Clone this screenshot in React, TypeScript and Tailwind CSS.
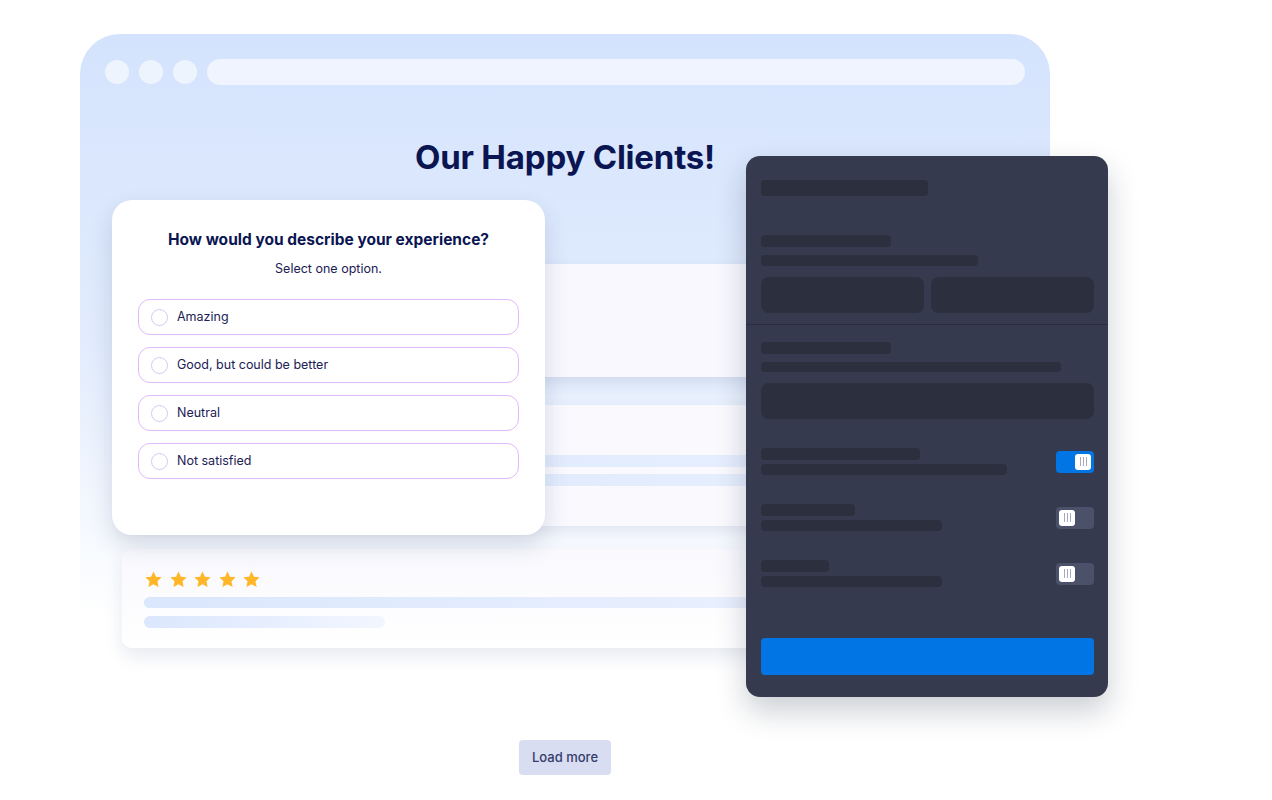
import { Fragment } from "react";

const OPTIONS = ["Amazing", "Good, but could be better", "Neutral", "Not satisfied"];

function StarIcon() {
  return (
    <svg viewBox="0 0 24 24" className="w-[19px] h-[19px]">
      <path
        d="M12 1.8l3.1 6.6 7.2.9-5.3 5 1.4 7.1L12 17.9l-6.4 3.5 1.4-7.1-5.3-5 7.2-.9z"
        fill="#ffb629"
      />
    </svg>
  );
}

function Toggle({ on }: { on: boolean }) {
  return (
    <div
      className={`w-[38px] h-[22px] rounded-[4px] p-[3px] flex ${on ? "bg-[#0075e3] justify-end" : "bg-[#4b5169] justify-start"}`}
    >
      <div className="w-[16px] h-[16px] rounded-[3px] bg-white flex items-center justify-center gap-[2px]">
        <span className="w-px h-[9px] bg-[#a5aac0]" />
        <span className="w-px h-[9px] bg-[#a5aac0]" />
        <span className="w-px h-[9px] bg-[#a5aac0]" />
      </div>
    </div>
  );
}

const Bar = ({ w, h, mt }: { w: string; h: string; mt: string }) => (
  <div className={`${w} ${h} ${mt} rounded-[4px] bg-[#2b2f3e]`} />
);

export default function App() {
  return (
    <div className="relative w-[1272px] h-[800px] bg-white overflow-hidden font-['Inter',sans-serif] text-[#0a1551]">
      <div className="pt-[34px] pl-[80px]">
        {/* Background browser window */}
        <div className="w-[970px] h-[680px] rounded-t-[40px] bg-gradient-to-b from-[#d4e3fd] via-[#e2ecfd] via-45% to-white to-86% px-[25px] pt-[25px]">
          <div className="flex items-center gap-[10px]">
            <div className="w-[24px] h-[24px] rounded-full bg-[#eef4fe]" />
            <div className="w-[24px] h-[24px] rounded-full bg-[#eef4fe]" />
            <div className="w-[24px] h-[24px] rounded-full bg-[#eef4fe]" />
            <div className="w-[820px] h-[26px] rounded-full bg-[#eff4fe]" />
          </div>
          <h1 className="mt-[52px] text-center text-[33px] leading-[40px] font-bold tracking-[-0.2px]">Our Happy Clients!</h1>

          <div className="ml-[17px] mt-[87px] w-[886px] flex flex-col">
            <div className="h-[113px] rounded-[8px] bg-[#f8f8fe] shadow-[0_6px_14px_rgba(60,80,130,0.12)]" />
            <div className="mt-[28px] h-[121px] rounded-[8px] bg-[#f9f9fe] shadow-[0_6px_14px_rgba(60,80,130,0.10)] px-[22px] pt-[50px]">
              <div className="h-[12px] rounded-full bg-gradient-to-r from-[#dbe7fd] to-[#eaf1fe]" />
              <div className="mt-[7px] h-[12px] rounded-full bg-gradient-to-r from-[#dbe7fd] to-[#eaf1fe]" />
            </div>
            <div className="mt-[23px] h-[99px] rounded-[10px] bg-gradient-to-b from-[#f9f9fe] to-white shadow-[0_8px_18px_rgba(60,80,130,0.12)] px-[22px] pt-[21px]">
              <div className="flex gap-[5.5px]">
                {[0, 1, 2, 3, 4].map((i) => (
                  <StarIcon key={i} />
                ))}
              </div>
              <div className="mt-[8px] h-[11px] rounded-full bg-gradient-to-r from-[#dbe7fd] to-[#eef3fe]" />
              <div className="mt-[8px] w-[241px] h-[12px] rounded-full bg-gradient-to-r from-[#dbe7fd] to-[#f2f6ff]" />
            </div>
          </div>
        </div>

        <div className="w-[970px] flex justify-center mt-[26px]">
          <button className="w-[92px] h-[35px] rounded-[4px] bg-[#d9ddf2] text-[13px] font-medium text-[#343c6a]">Load more</button>
        </div>
      </div>

      {/* Survey card */}
      <div className="absolute left-[112px] top-[200px] w-[433px] h-[335px] rounded-[20px] bg-white shadow-[0_10px_24px_rgba(40,55,100,0.16)] px-[26px] pt-[28px]">
        <h2 className="text-center text-[15.5px] leading-[24px] font-bold">How would you describe your experience?</h2>
        <p className="mt-[8px] text-center text-[12.5px] leading-[18px] text-[#1b2155]">Select one option.</p>
        <div className="mt-[21px] flex flex-col gap-[12px]">
          {OPTIONS.map((opt) => (
            <div key={opt} className="h-[36px] rounded-[12px] border-[1.5px] border-[#e2b9fa] flex items-center pl-[12px] gap-[9px]">
              <span className="w-[17px] h-[17px] rounded-full border-[1.5px] border-[#c9d0f0]" />
              <span className="text-[12.5px] text-[#1b2155]">{opt}</span>
            </div>
          ))}
        </div>
      </div>

      {/* Dark settings panel */}
      <div className="absolute left-[746px] top-[156px] w-[362px] h-[541px] rounded-[14px] bg-[#353a4e] shadow-[0_14px_30px_rgba(20,30,60,0.22)] flex flex-col">
        <div className="pl-[15px] pr-[14px] pt-[24px] pb-[11px]">
          <Bar w="w-[167px]" h="h-[16px]" mt="mt-0" />
          <Bar w="w-[130px]" h="h-[12px]" mt="mt-[39px]" />
          <Bar w="w-[217px]" h="h-[11px]" mt="mt-[8px]" />
          <div className="mt-[11px] flex gap-[7px]">
            <div className="flex-1 h-[36px] rounded-[8px] bg-[#2b2f3e]" />
            <div className="flex-1 h-[36px] rounded-[8px] bg-[#2b2f3e]" />
          </div>
        </div>
        <div className="h-px bg-[#2b2f3d]" />
        <div className="pl-[15px] pr-[14px] pt-[17px]">
          <Bar w="w-[130px]" h="h-[12px]" mt="mt-0" />
          <Bar w="w-[300px]" h="h-[10px]" mt="mt-[8px]" />
          <div className="mt-[11px] h-[36px] rounded-[8px] bg-[#2b2f3e]" />
          {[
            { a: "w-[159px]", b: "w-[246px]", on: true },
            { a: "w-[94px]", b: "w-[181px]", on: false },
            { a: "w-[68px]", b: "w-[181px]", on: false },
          ].map((r, i) => (
            <Fragment key={i}>
              <div className="flex items-center justify-between mt-[29px]">
                <div>
                  <Bar w={r.a} h="h-[12px]" mt="mt-0" />
                  <Bar w={r.b} h="h-[11px]" mt="mt-[4px]" />
                </div>
                <Toggle on={r.on} />
              </div>
            </Fragment>
          ))}
          <div className="mt-[51px] h-[37px] rounded-[4px] bg-[#0075e3]" />
        </div>
      </div>
    </div>
  );
}
